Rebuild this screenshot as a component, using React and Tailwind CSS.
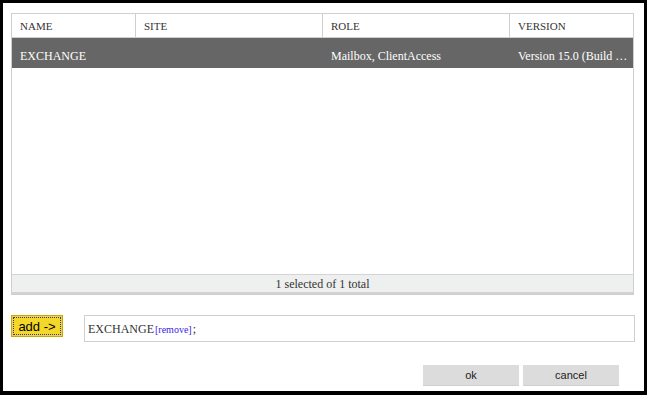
export default function App() {
  const serif = { fontFamily: '"Liberation Serif", "Times New Roman", serif' };
  const cols = ["NAME", "SITE", "ROLE", "VERSION"];
  const row = ["EXCHANGE", "", "Mailbox, ClientAccess", "Version 15.0 (Build …"];
  const widths = ["w-[124px]", "w-[187px]", "w-[187px]", "flex-1"];

  return (
    <div className="w-[647px] h-[395px] bg-black pt-[3px] pl-[3px] pr-[3px] pb-[4px]">
      <div className="w-full h-full bg-white flex flex-col" style={serif}>
        {/* server list */}
        <div className="ml-[8px] mt-[10px] w-[623px] h-[282px] border border-[#cfcfcf] flex flex-col">
          <div className="flex h-[24px] border-b border-[#cfcfcf] text-[11px] text-[#333]">
            {cols.map((c, i) => (
              <div
                key={c}
                className={`${widths[i]} ${i < 3 ? "border-r border-[#cfcfcf]" : ""} pl-[8px] pt-[2px] flex items-center`}
              >
                {c}
              </div>
            ))}
          </div>
          <div className="flex h-[30px] bg-[#666666] text-white text-[12px]">
            {row.map((c, i) => (
              <div key={i} className={`${widths[i]} pl-[8px] pt-[6px] flex items-center whitespace-nowrap overflow-hidden`}>
                {c}
              </div>
            ))}
          </div>
          <div className="flex-1" />
          <div className="h-[20px] bg-[#edf0ef] border-t border-[#d4d4d4] border-b-2 border-b-[#d2d2d2] flex items-center justify-center pt-[1px] text-[12px] text-[#333]">
            1 selected of 1 total
          </div>
        </div>

        {/* selection */}
        <div className="flex ml-[8px] mt-[20px] mr-[9px] gap-[21px] items-start">
          <button
            className="w-[52px] h-[22px] bg-[#f3d82a] border border-[#c9a800] text-[13px] text-black p-[1px]"
            style={{ fontFamily: '"Liberation Sans", Arial, sans-serif' }}
          >
            <span className="flex items-center justify-center w-full h-full border border-dotted border-[#2a2ad0] leading-none">
              add -&gt;
            </span>
          </button>
          <div className="flex-1 h-[27px] border border-[#cfcfcf] flex items-center pl-[3px] text-[12px] text-[#333]">
            EXCHANGE
            <span className="text-[10px] text-[#3a22e8] ml-[1px] mt-[2px]">[remove]</span>
            <span className="ml-[1px]">;</span>
          </div>
        </div>

        {/* actions */}
        <div
          className="flex justify-end gap-[4px] mt-[23px] mr-[25px] text-[11px] text-[#222]"
          style={{ fontFamily: '"Liberation Sans", Arial, sans-serif' }}
        >
          <button className="w-[96px] h-[21px] bg-[#dcdcdc] border-b border-[#cfcfcf]">ok</button>
          <button className="w-[96px] h-[21px] bg-[#dcdcdc] border-b border-[#cfcfcf]">cancel</button>
        </div>
      </div>
    </div>
  );
}
